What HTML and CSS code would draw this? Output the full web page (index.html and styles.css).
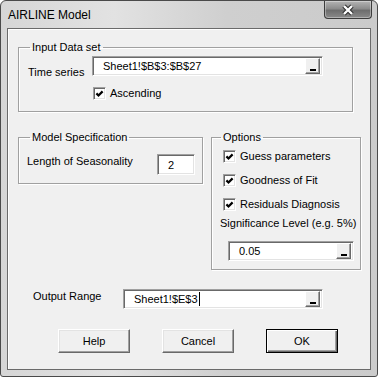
FILE: index.html
```html
<!DOCTYPE html>
<html lang="en">

<head>
    <meta charset="UTF-8">
    <title>AIRLINE Model</title>
    <link rel="stylesheet" href="styles.css">
</head>

<body>

    <div class="window">
        <div class="titlebar">
            <span class="title">AIRLINE Model</span>
            <button class="close" aria-label="Close">
                <svg width="14" height="12" viewBox="0 0 14 12">
                    <path d="M3 2 L11 10 M11 2 L3 10" stroke="#2e2e2e" stroke-width="4.5" fill="none"/>
                    <path d="M3 2 L11 10 M11 2 L3 10" stroke="#fff" stroke-width="2.4" fill="none"/>
                </svg>
            </button>
        </div>

        <div class="client">
            <!-- Input Data set -->
            <fieldset class="group group-input">
                <legend>Input Data set</legend>
                <div class="field-row">
                    <label class="lbl lbl-series">Time series</label>
                    <div class="refedit refedit-series">
                        <span class="val">Sheet1!$B$3:$B$27</span>
                        <span class="dash-btn"><span class="bar"></span></span>
                    </div>
                </div>
                <div class="check check-asc">
                    <span class="box"><svg width="9" height="9" viewBox="0 0 9 9"><path d="M1.4 4.4 L3.5 6.5 L7.6 2.4" stroke="#000" stroke-width="2.2" fill="none"/></svg></span>
                    <span>Ascending</span>
                </div>
            </fieldset>

            <div class="groups-row">
                <!-- Model Specification -->
                <fieldset class="group group-model">
                    <legend>Model Specification</legend>
                    <div class="field-row">
                        <label class="lbl lbl-season">Length of Seasonality</label>
                        <div class="textbox textbox-season">2</div>
                    </div>
                </fieldset>

                <!-- Options -->
                <fieldset class="group group-options">
                    <legend>Options</legend>
                    <div class="checks">
                        <div class="check">
                            <span class="box"><svg width="9" height="9" viewBox="0 0 9 9"><path d="M1.4 4.4 L3.5 6.5 L7.6 2.4" stroke="#000" stroke-width="2.2" fill="none"/></svg></span>
                            <span>Guess parameters</span>
                        </div>
                        <div class="check">
                            <span class="box"><svg width="9" height="9" viewBox="0 0 9 9"><path d="M1.4 4.4 L3.5 6.5 L7.6 2.4" stroke="#000" stroke-width="2.2" fill="none"/></svg></span>
                            <span>Goodness of Fit</span>
                        </div>
                        <div class="check">
                            <span class="box"><svg width="9" height="9" viewBox="0 0 9 9"><path d="M1.4 4.4 L3.5 6.5 L7.6 2.4" stroke="#000" stroke-width="2.2" fill="none"/></svg></span>
                            <span>Residuals Diagnosis</span>
                        </div>
                    </div>
                    <div class="lbl lbl-signif">Significance Level (e.g. 5%)</div>
                    <div class="refedit refedit-signif">
                        <span class="val">0.05</span>
                        <span class="dash-btn"><span class="bar"></span></span>
                    </div>
                </fieldset>
            </div>

            <div class="field-row output-row">
                <label class="lbl lbl-output">Output Range</label>
                <div class="refedit refedit-output">
                    <span class="val">Sheet1!$E$3<span class="caret"></span></span>
                    <span class="dash-btn"><span class="bar"></span></span>
                </div>
            </div>

            <div class="buttons">
                <button class="btn">Help</button>
                <button class="btn">Cancel</button>
                <button class="btn btn-default">OK</button>
            </div>
        </div>
    </div>

</body>

</html>
```

FILE: styles.css
```css
* {
    box-sizing: border-box;
}

body {
    margin: 0;
    font-family: "Liberation Sans", Arial, sans-serif;
    font-size: 11px;
    color: #000;
    background: #fff;
}

.window {
    width: 378px;
    height: 377px;
    border: 1px solid #4a4a4a;
    border-radius: 6px 6px 3px 3px;
    padding: 0 6px 6px;
    background: linear-gradient(90deg, #d6d6d6 0, #e2e2e2 30%, #cfcfcf 60%, #cbcbcb 100%);
    overflow: hidden;
}

.titlebar {
    height: 27px;
    display: flex;
    justify-content: space-between;
    align-items: flex-start;
    padding-left: 1px;
    margin-right: -1px;
}

.title {
    font-size: 12px;
    line-height: 14px;
    padding-top: 7px;
}

.close {
    width: 48px;
    height: 18px;
    padding: 0;
    margin: 0;
    border: 1px solid #3c3c3c;
    border-top: none;
    border-radius: 0 0 4px 4px;
    background: linear-gradient(#b4b4b4 0, #8c8c8c 45%, #6e6e6e 55%, #8a8a8a 100%);
    box-shadow: inset 0 0 0 1px rgba(255, 255, 255, 0.35);
    display: flex;
    align-items: center;
    justify-content: center;
}

.close svg {
    display: block;
}

.client {
    height: 342px;
    border: 1px solid #6a6a6a;
    background: #f0f0f0;
    box-shadow: inset 1px 1px #fff;
    padding-top: 12px;
}

.group {
    margin: 0;
    border: 1px solid #a0a0a0;
    box-shadow: inset 1px 1px #fff, 1px 1px #fff;
    min-width: 0;
}

.group legend {
    padding: 0 2px;
    margin-left: 2px;
    line-height: 13px;
}

.lbl {
    line-height: 13px;
    white-space: nowrap;
}

.field-row {
    display: flex;
    align-items: flex-start;
}

/* sunken edit boxes */
.refedit,
.textbox {
    height: 20px;
    background: #fff;
    border: 1px solid;
    border-color: #a0a0a0 #fff #fff #a0a0a0;
    box-shadow: inset 1px 1px #696969, inset -1px -1px #e3e3e3;
    display: flex;
    align-items: center;
    justify-content: space-between;
    padding-left: 10px;
    padding-right: 2px;
}

.val {
    display: flex;
    align-items: center;
}

.caret {
    display: inline-block;
    width: 1px;
    height: 14px;
    background: #000;
    margin-left: 1px;
}

.dash-btn {
    width: 15px;
    height: 16px;
    background: #f0f0f0;
    border: 1px solid;
    border-color: #fff #696969 #696969 #fff;
    box-shadow: inset -1px -1px #a0a0a0;
    display: flex;
    align-items: flex-end;
    justify-content: center;
    padding-bottom: 2px;
}

.dash-btn .bar {
    width: 6px;
    height: 2px;
    background: #000;
}

/* check boxes */
.check {
    display: flex;
    align-items: center;
    gap: 4px;
    line-height: 13px;
}

.box {
    width: 13px;
    height: 13px;
    background: #fff;
    border: 1px solid;
    border-color: #a0a0a0 #fff #fff #a0a0a0;
    box-shadow: inset 1px 1px #696969, inset -1px -1px #e3e3e3;
    padding: 1px;
    display: flex;
}

.box svg {
    display: block;
}

/* Input Data set */
.group-input {
    margin-left: 10px;
    width: 335px;
    padding: 2px 0 11px 9px;
}

.lbl-series {
    width: 64px;
    padding-top: 10px;
}

.refedit-series {
    width: 231px;
}

.check-asc {
    margin-top: 8px;
    margin-left: 65px;
}

/* Model + Options */
.groups-row {
    display: flex;
    align-items: flex-start;
    gap: 8px;
    margin-top: 19px;
    margin-left: 10px;
}

.group-model {
    width: 185px;
    padding: 10px 0 8px 8px;
}

.group-model legend {
    margin-left: 3px;
}

.lbl-season {
    width: 130px;
    padding-top: 1px;
}

.textbox-season {
    width: 38px;
    height: 21px;
    justify-content: flex-start;
}

.group-options {
    width: 150px;
    padding: 6px 0 8px 11px;
}

.group-options legend {
    margin-left: -2px;
}

.checks {
    display: flex;
    flex-direction: column;
    gap: 11px;
}

.lbl-signif {
    margin-top: 6px;
    margin-left: -3px;
}

.refedit-signif {
    width: 126px;
    margin-top: 11px;
    margin-left: 5px;
}

/* Output range */
.output-row {
    margin-top: 19px;
    margin-left: 25px;
}

.lbl-output {
    width: 90px;
    padding-top: 1px;
}

.refedit-output {
    width: 200px;
}

/* command buttons */
.buttons {
    display: flex;
    gap: 32px;
    margin-top: 20px;
    margin-left: 50px;
}

.btn {
    width: 72px;
    height: 24px;
    font-family: inherit;
    font-size: 11px;
    color: #000;
    background: #f0f0f0;
    border: 1px solid;
    border-color: #fff #696969 #696969 #fff;
    box-shadow: inset -1px -1px #a0a0a0, inset 1px 1px #e3e3e3;
    padding: 0;
}

.btn-default {
    border: 1px solid #000;
    box-shadow: inset 1px 1px #fff, inset -1px -1px #696969, inset -2px -2px #a0a0a0;
}
```
